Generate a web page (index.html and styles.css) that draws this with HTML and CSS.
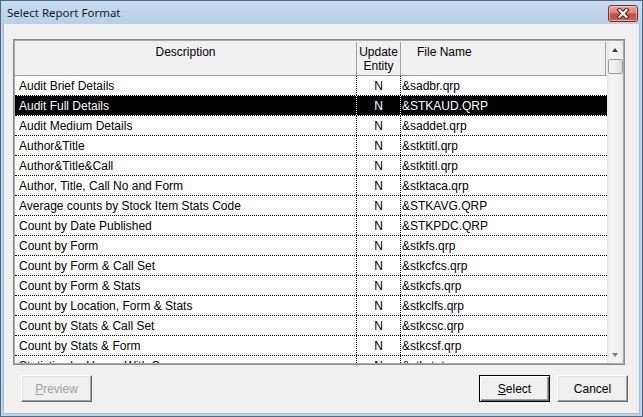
FILE: index.html
```html
<!DOCTYPE html>
<html>
<head>
<meta charset="utf-8">
<link rel="stylesheet" href="styles.css">
</head>
<body>
<div class="window">
  <div class="titlebar">
    <span class="title">Select Report Format</span>
    <div class="close">
      <svg width="14" height="11" viewBox="0 0 14 11">
        <path d="M3.5 2 L10.5 9 M10.5 2 L3.5 9" stroke="#4a1e1a" stroke-width="4.2" stroke-linecap="square" fill="none"/>
        <path d="M3.5 2 L10.5 9 M10.5 2 L3.5 9" stroke="#ffffff" stroke-width="2.2" stroke-linecap="square" fill="none"/>
      </svg>
    </div>
  </div>
  <div class="client">
    <div class="listbox">
      <div class="grid">
        <div class="header">
          <div class="hcell desc">Description</div>
          <div class="hcell upd">Update<br>Entity</div>
          <div class="hcell file">File Name</div>
        </div>
        <div class="rows">
          <div class="row"><div class="c desc">Audit Brief Details</div><div class="c upd">N</div><div class="c file">&amp;sadbr.qrp</div></div>
          <div class="row sel"><div class="c desc">Audit Full Details</div><div class="c upd">N</div><div class="c file">&amp;STKAUD.QRP</div></div>
          <div class="row"><div class="c desc">Audit Medium Details</div><div class="c upd">N</div><div class="c file">&amp;saddet.qrp</div></div>
          <div class="row"><div class="c desc">Author&amp;Title</div><div class="c upd">N</div><div class="c file">&amp;stktitl.qrp</div></div>
          <div class="row"><div class="c desc">Author&amp;Title&amp;Call</div><div class="c upd">N</div><div class="c file">&amp;stktitl.qrp</div></div>
          <div class="row"><div class="c desc">Author, Title, Call No and Form</div><div class="c upd">N</div><div class="c file">&amp;stktaca.qrp</div></div>
          <div class="row"><div class="c desc">Average counts by Stock Item Stats Code</div><div class="c upd">N</div><div class="c file">&amp;STKAVG.QRP</div></div>
          <div class="row"><div class="c desc">Count by Date Published</div><div class="c upd">N</div><div class="c file">&amp;STKPDC.QRP</div></div>
          <div class="row"><div class="c desc">Count by Form</div><div class="c upd">N</div><div class="c file">&amp;stkfs.qrp</div></div>
          <div class="row"><div class="c desc">Count by Form &amp; Call Set</div><div class="c upd">N</div><div class="c file">&amp;stkcfcs.qrp</div></div>
          <div class="row"><div class="c desc">Count by Form &amp; Stats</div><div class="c upd">N</div><div class="c file">&amp;stkcfs.qrp</div></div>
          <div class="row"><div class="c desc">Count by Location, Form &amp; Stats</div><div class="c upd">N</div><div class="c file">&amp;stkclfs.qrp</div></div>
          <div class="row"><div class="c desc">Count by Stats &amp; Call Set</div><div class="c upd">N</div><div class="c file">&amp;stkcsc.qrp</div></div>
          <div class="row"><div class="c desc">Count by Stats &amp; Form</div><div class="c upd">N</div><div class="c file">&amp;stkcsf.qrp</div></div>
          <div class="row"><div class="c desc">Statistics by Usage With Summary</div><div class="c upd">N</div><div class="c file">&amp;stkstat.qrp</div></div>
        </div>
      </div>
      <div class="scrollbar">
        <div class="arrow"><span class="tri up"></span></div>
        <div class="track">
          <div class="thumb"></div>
        </div>
        <div class="arrow"><span class="tri down"></span></div>
      </div>
    </div>
    <div class="buttons">
      <div class="btn disabled"><span><u>P</u>review</span></div>
      <div class="spacer"></div>
      <div class="btn default"><span><u>S</u>elect</span></div>
      <div class="btn"><span>Cancel</span></div>
    </div>
  </div>
</div>
</body>
</html>
```

FILE: styles.css
```css
html, body {
  margin: 0;
  padding: 0;
  background: #ffffff;
}

body {
  width: 643px;
  height: 417px;
  overflow: hidden;
  font-family: "Liberation Sans", Arial, sans-serif;
  font-size: 12px;
  color: #000;
}

.window {
  box-sizing: border-box;
  width: 643px;
  height: 417px;
  border: 1px solid #4f6a88;
  background: #bcd3ea;
  display: flex;
  flex-direction: column;
}

.titlebar {
  height: 23px;
  flex: none;
  display: flex;
  align-items: flex-start;
  background: linear-gradient(to bottom, #c9dcf0 0%, #c0d6ee 45%, #b8cfe9 100%);
}

.title {
  font-family: "Noto Sans", "Open Sans", sans-serif;
  font-size: 11.5px;
  color: #1a1a1a;
  margin-left: 6px;
  margin-top: 4px;
  line-height: 16px;
  flex: 1;
}

.close {
  width: 30px;
  height: 17px;
  box-sizing: border-box;
  margin-top: 4px;
  margin-right: 4px;
  border: 1px solid #7a2e28;
  border-radius: 3px;
  background: linear-gradient(to bottom, #e7aba3 0%, #d88074 45%, #c24e40 55%, #c8625a 100%);
  box-shadow: inset 0 0 0 1px rgba(255, 220, 215, 0.55);
  display: flex;
  align-items: center;
  justify-content: center;
}

.close svg {
  display: block;
}

.client {
  flex: 1;
  margin: 0 2px 2px 2px;
  background: #f0f0f0;
  display: flex;
  flex-direction: column;
  padding: 15px 12px 0 10px;
  box-shadow: inset 1px 0 0 #a7bbd2, inset -1px 0 0 #a7bbd2, inset 0 -1px 0 #a7bbd2;
}

.listbox {
  width: 612px;
  height: 326px;
  box-sizing: border-box;
  border: 1px solid #8a8a8a;
  padding: 1px;
  background: #a9a9a9;
  display: flex;
  flex: none;
}

.grid {
  width: 592px;
  flex: none;
  background: #ffffff;
  display: flex;
  flex-direction: column;
  overflow: hidden;
}

.header {
  height: 35px;
  box-sizing: border-box;
  flex: none;
  display: grid;
  grid-template-columns: 342px 44px 1fr;
  background: #f0f0f0;
  border-bottom: 1px solid #a0a0a0;
  border-top: 1px solid #f0f0f0;
}

.hcell {
  padding-top: 3px;
  line-height: 14px;
  border-right: 1px solid #a0a0a0;
}

.hcell.desc {
  text-align: center;
}

.hcell.upd {
  text-align: center;
}

.hcell.file {
  padding-left: 16px;
  margin-right: 1px;
}

.rows {
  flex: 1;
  overflow: hidden;
}

.row {
  height: 20px;
  box-sizing: border-box;
  display: grid;
  grid-template-columns: 342px 44px 1fr;
  border-bottom: 1px dotted #000;
  line-height: 18px;
  white-space: nowrap;
}

.c {
  overflow: hidden;
  padding-top: 1px;
}

.c.desc {
  padding-left: 4px;
  border-right: 1px dotted #000;
}

.c.upd {
  text-align: center;
  border-right: 1px dotted #000;
}

.c.file {
  padding-left: 1px;
}

.row.sel {
  background: #000;
  background-clip: padding-box;
  color: #fff;
}

.row.sel .c.desc,
.row.sel .c.upd {
  border-right-color: #fff;
}

.scrollbar {
  width: 16px;
  flex: none;
  display: flex;
  flex-direction: column;
  background: linear-gradient(to right, #e3e3e3 0%, #f4f4f4 20%, #f0f0f0 80%, #e8e8e8 100%);
}

.arrow {
  height: 17px;
  flex: none;
  display: flex;
  align-items: center;
  justify-content: center;
}

.tri {
  width: 0;
  height: 0;
  border-left: 3.5px solid transparent;
  border-right: 3.5px solid transparent;
}

.tri.up {
  border-bottom: 4px solid #404040;
}

.tri.down {
  border-top: 4px solid #7a7a7a;
}

.track {
  flex: 1;
  padding: 1px 0 0 0;
}

.thumb {
  margin: 0 0 0 1px;
  width: 15px;
  height: 15px;
  box-sizing: border-box;
  border: 1px solid #9a9a9a;
  border-radius: 2px;
  background: linear-gradient(to right, #f4f4f4 0%, #ececec 50%, #dcdcdc 100%);
}

.buttons {
  margin-top: 10px;
  display: flex;
  height: 27px;
  flex: none;
}

.spacer {
  flex: 1;
}

.btn {
  width: 71px;
  height: 27px;
  box-sizing: border-box;
  border: 1px solid;
  border-color: #ffffff #696969 #696969 #ffffff;
  box-shadow: inset -1px -1px 0 #a0a0a0, inset 1px 1px 0 #e3e3e3;
  background: #f0f0f0;
  display: flex;
  align-items: center;
  justify-content: center;
  font-size: 12px;
  color: #000;
  margin-left: 7px;
}

.btn.disabled {
  margin-left: 8px;
  color: #a0a0a0;
}

.btn.default {
  border: 1px solid #000;
  box-shadow: inset 1px 1px 0 #ffffff, inset -1px -1px 0 #696969, inset -2px -2px 0 #a0a0a0;
  margin-left: 0;
}

.btn span {
  line-height: 14px;
  padding-top: 1px;
}

.btn u {
  text-decoration: underline;
  text-underline-offset: 1px;
}
```
